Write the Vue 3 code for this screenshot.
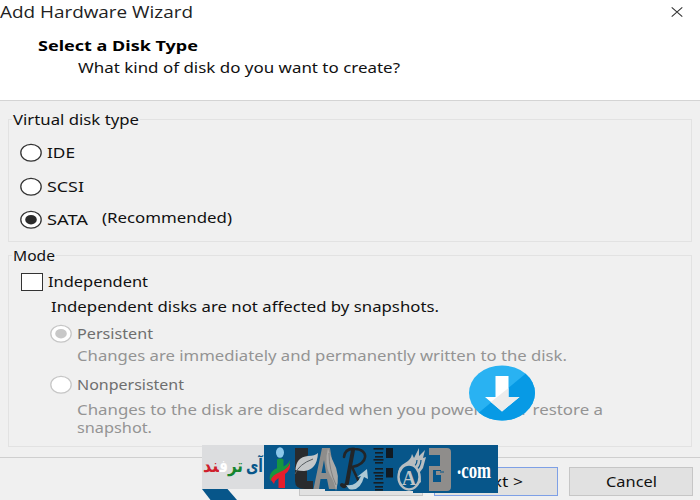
<script setup>
import { h } from 'vue'

// One line of text fitted to a given width on a 20px line with its baseline at 15px.
const Line = (props) =>
  h('svg', { width: props.w, height: 20, class: 'line' }, [
    h('text', { x: 0, y: 15, textLength: props.w, lengthAdjust: 'spacingAndGlyphs' }, props.t),
  ])
Line.props = ['t', 'w']

// Radio button, slightly wider than tall.
const Radio = (props) =>
  h('svg', { width: 22, height: 20, class: 'radio' }, [
    h('ellipse', { cx: 11, cy: 9.7, rx: 10.2, ry: 8.4, fill: '#fff', stroke: props.off ? '#c6c6c6' : '#333', 'stroke-width': 1.3 }),
    props.on ? h('ellipse', { cx: 11, cy: 9.7, rx: 5.8, ry: 4.8, fill: props.off ? '#c8c8c8' : '#2b2b2b' }) : null,
  ])
Radio.props = { on: Boolean, off: Boolean }

const notches = [0, 4, 8, 11, 14, 20, 24, 27, 30, 34, 38, 41]
</script>

<template>
  <main class="dialog">
    <header class="head">
      <div class="titlebar">
        <Line class="title" t="Add Hardware Wizard" :w="193" />
        <svg class="close" width="12" height="12" viewBox="0 0 12 12">
          <path d="M.7 1.4 11.3 10.6M11.3 1.4.7 10.6" stroke="#333" stroke-width="1.1" />
        </svg>
      </div>
      <Line class="heading" t="Select a Disk Type" :w="160" />
      <Line class="question" t="What kind of disk do you want to create?" :w="322" />
    </header>

    <section class="group types">
      <div class="legend"><Line t="Virtual disk type" :w="126" /></div>
      <div class="options">
        <div class="row"><Radio /><Line t="IDE" :w="28" /></div>
        <div class="row second"><Radio /><Line t="SCSI" :w="37" /></div>
        <div class="row"><Radio on /><Line t="SATA" :w="41" /><Line class="hint" t="(Recommended)" :w="130" /></div>
      </div>
    </section>

    <section class="group mode">
      <div class="legend"><Line t="Mode" :w="42" /></div>
      <div class="row check"><span class="box"></span><Line t="Independent" :w="100" /></div>
      <div class="sub">
        <Line t="Independent disks are not affected by snapshots." :w="388" />
        <div class="row dim persistent"><Radio on off /><Line t="Persistent" :w="76" /></div>
        <Line class="note" t="Changes are immediately and permanently written to the disk." :w="490" />
        <div class="row dim non"><Radio off /><Line t="Nonpersistent" :w="107" /></div>
        <Line class="note discard" t="Changes to the disk are discarded when you power off or restore a" :w="526" />
        <Line class="note last" t="snapshot." :w="75" />
      </div>
    </section>

    <footer class="foot">
      <div class="btn"></div>
      <div class="btn next"><Line t="Next &gt;" :w="53" /></div>
      <div class="btn cancel"><Line t="Cancel" :w="51" /></div>
    </footer>

    <svg class="download" width="68" height="56" viewBox="0 0 68 56">
      <defs><clipPath id="disc"><ellipse cx="34" cy="28" rx="33" ry="27.5" /></clipPath></defs>
      <g clip-path="url(#disc)">
        <path d="M0 0H68V56H0z" fill="#29b2f2" />
        <path d="M68 0 8 50V56H68z" fill="#079ae5" />
      </g>
      <path d="M27.5 11H40.5V32H51.5L34 46.5 17 32H27.5z" fill="#fff" />
      <path d="M40.5 23V32H51.5L34 46.5 22.8 37z" fill="#ececec" />
    </svg>

    <svg class="brand" width="300" height="60" viewBox="198 440 300 60">
      <path d="M202 445H264V489H202z" fill="#dcdddf" />
      <path d="M202 489H227.5L237 500H210.5z" fill="#07568a" />
      <path d="M264 445H498V493H413V491H325V489H264z" fill="#07568a" />
      <g class="persian">
        <text x="246" y="472" textLength="17" lengthAdjust="spacingAndGlyphs" fill="#07568a">آی</text>
        <text x="228" y="472" textLength="15" lengthAdjust="spacingAndGlyphs" fill="#16842e">تر</text>
        <text x="219" y="472" textLength="9" lengthAdjust="spacingAndGlyphs" fill="#fff">ف&zwj;</text>
        <text x="203" y="472" textLength="16" lengthAdjust="spacingAndGlyphs" fill="#cf1f2d">&zwj;ند</text>
      </g>
      <ellipse cx="280" cy="452.5" rx="4" ry="5.2" fill="#8cc7ea" />
      <path d="M277 459.5Q280 457.5 283.5 459.5V471L277 476z" fill="#17953e" />
      <path d="M270 475Q273 468 281 467 287 466 290 460 290 469 280 473 273 476 271 481 269 480 270 475z" fill="#17953e" />
      <path d="M290 463Q288 469 280 472 272 475 271 480L274 484Q275 480 278.5 478V488H285V474Q291 470 290 463z" fill="#e51e2d" />
      <path d="M295 448H308V455L302 462 307 470V481H313V489H305Q295 489 295 481z" fill="#292b2e" />
      <path d="M295.500 470Q296 457 308 456 315 456 318 453 317 470 304 471 300 471 295.500 470z" fill="#c4c7c9" />
      <path d="M295 474Q299 464 313 459" stroke="#565c60" fill="none" />
      <path d="M313.500 489 322 448H330L337 489H329L327 479H320.500L319 489zM321.500 473H326L324 460z" fill="#8e8d8b" />
      <path d="M328 448Q324 464 330 475 335 483 336 491 341 475 333 461 330 456 328 448z" fill="#aaa9a7" />
      <path d="M329 453Q329 470 336 485" stroke="#777" fill="none" stroke-width=".8" />
      <g fill="none" stroke="#222528" stroke-linecap="round">
        <path d="M353 450 347 483Q345 488 342 485" stroke-width="4" />
        <path d="M344 457Q345 448 355 449C369 449 369 464 352 467L359 482" stroke-width="2.6" />
      </g>
      <path d="M346 485Q356 487 361 476L357 477 367 469 368 479 364 477Q360 492 349 489z" fill="#aec9d5" />
      <rect v-for="(n, i) in notches" :key="n" :x="i % 3 ? 375 : 373.500" :y="448 + n" :width="i % 3 ? 8 : 10" height="1.6" fill="#171d23" />
      <path d="M386 448H393V458H386zM386 468H393V477.500H386z" fill="#111a22" />
      <path d="M398 475Q398 466 405 463 411 460 412 454L414 458 419 448 419 456 425 450 423 458 426 457 423 468 420 472 421 482 414 488 408 471 398 475z" fill="#b7bdc0" />
      <path d="M409 469Q417 467 417 460M415 471Q421 467 421 460" stroke="#07568a" fill="none" stroke-width="1.2" />
      <ellipse cx="409" cy="477" rx="10.5" ry="12.5" fill="#07568a" stroke="#b7bdc0" stroke-width="2.4" />
      <text class="badge" x="402" y="485" textLength="14" lengthAdjust="spacingAndGlyphs">A</text>
      <path d="M429 448H447Q451 448 451 452V487Q451 491 447 491H429V466H440V455H429zM433 470V482H441V475H436V471H441V470z" fill="#8f8d8b" fill-rule="evenodd" />
      <path d="M440 472H444" stroke="#07568a" />
      <text class="com" x="457" y="478" textLength="34" lengthAdjust="spacingAndGlyphs"><tspan dy="-4">.</tspan><tspan dy="4">com</tspan></text>
    </svg>
  </main>
</template>

<style>
body { margin: 0; background: #f0f0f0; overflow: hidden; }
</style>

<style scoped>
.dialog {
  position: relative;
  width: 700px;
  height: 500px;
  overflow: hidden;
  background: #f0f0f0;
  font-family: "Noto Sans", "DejaVu Sans", sans-serif;
  font-size: 14.4px;
}
svg { display: block; flex: none; }
.line { overflow: visible; fill: #111; }
.head {
  box-sizing: border-box;
  height: 101px;
  padding-top: 3px;
  background: #fff;
  border-bottom: 1px solid #d4d4d4;
}
.titlebar { display: flex; justify-content: space-between; padding-right: 17px; }
.title { font-family: "Open Sans", sans-serif; font-size: 16px; fill: #222; }
.close { margin-top: 3px; }
.heading { margin: 13px 0 2px 38px; font-weight: 700; fill: #000; }
.question { margin-left: 78px; }
.group { box-sizing: border-box; margin: 0 8px; border: 1px solid #e2e2e2; }
.types { margin-top: 18px; height: 123px; }
.mode { margin-top: 13px; height: 192px; }
.legend { width: max-content; margin: -10px 0 0 3px; padding: 0 1px; background: #f0f0f0; }
.options { padding: 13px 0 0 11px; }
.row { display: flex; align-items: flex-start; gap: 4.5px; height: 20px; }
.row.second { margin: 14px 0 13px; }
.hint { margin: -2px 0 0 9.5px; }
.check { margin: 6px 0 5px 12px; }
.box {
  box-sizing: border-box;
  width: 22px;
  height: 18px;
  margin-top: 1px;
  background: #fff;
  border: 1px solid #333;
}
.sub { padding-left: 42px; }
.persistent { margin: 7px 0 2px -1px; }
.dim .line { fill: #6e6e6e; }
.note { margin-left: 26px; fill: #949494; }
.non { margin: 9px 0 5px -1px; }
.last { margin-top: -2px; }
.foot {
  display: flex;
  justify-content: flex-end;
  gap: 11px;
  margin-top: 10px;
  padding: 9px 7px 0 0;
  border-top: 1px solid #cfcfcf;
}
.btn {
  box-sizing: border-box;
  display: flex;
  justify-content: center;
  width: 124px;
  height: 29px;
  padding-top: 4px;
  background: #e1e1e1;
  border: 1px solid #c6c6c6;
}
.btn.next { border-color: #7ea0e6; }
.download { position: absolute; left: 467.5px; top: 365px; }
.brand { position: absolute; left: 198px; top: 440px; }
.persian { font: 700 18px "DejaVu Sans", sans-serif; }
.badge { font: 700 20px "Liberation Serif", serif; fill: #c0c5c7; }
.com { font: 700 23px "Liberation Serif", serif; fill: #fff; }
</style>
